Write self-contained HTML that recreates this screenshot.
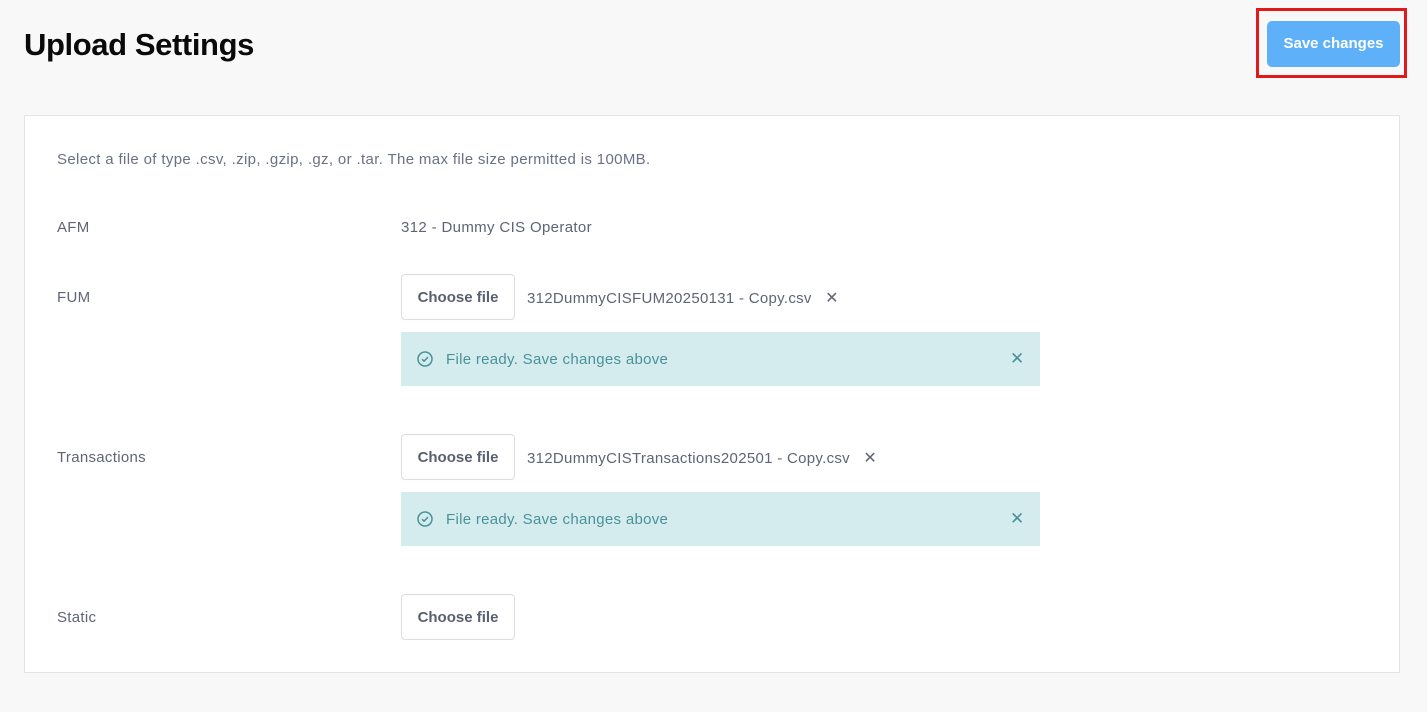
<!DOCTYPE html>
<html><head><style>
body{margin:0;background:#f8f8f9;font-family:"Liberation Sans",sans-serif;width:1427px;height:712px;position:relative;overflow:hidden}
h1{position:absolute;left:24px;top:27px;margin:0;font-size:31px;font-weight:bold;color:#0a0a0a;letter-spacing:-0.4px}
.hl{position:absolute;left:1256px;top:8px;width:151px;height:70px;box-sizing:border-box;border:3px solid #e0191b}
.save{position:absolute;left:1267px;top:21px;width:133px;height:46px;background:#5eb1f9;border-radius:5px;color:#fff;font-weight:bold;font-size:15px;text-align:center;line-height:46px}
.card{position:absolute;left:24px;top:115px;width:1374px;height:556px;background:#fff;border:1px solid #e3e3e6}
.t{position:absolute;color:#6b7184;font-size:15px;letter-spacing:0.35px}
.lbl{position:absolute;left:57px;color:#5f6575;font-size:15px;letter-spacing:0.3px}
.btn{position:absolute;left:401px;width:112px;height:44px;border:1px solid #dcdde2;border-radius:4px;background:#fff;color:#5b6070;font-weight:bold;font-size:15px;text-align:center;line-height:46px}
.fn{position:absolute;left:527px;color:#5f6575;font-size:15px;letter-spacing:0.3px}
.al{position:absolute;left:401px;width:639px;height:54px;background:#d5ecef;color:#4a9298;font-size:15px;line-height:54px;letter-spacing:0.3px}
.al span{position:absolute;left:45px;top:1px}
.al svg{position:absolute;left:16px;top:19px}
.al .x{position:absolute;left:609px;font-size:17px}
</style></head><body>
<h1>Upload Settings</h1>
<div class="hl"></div><div class="save">Save changes</div>
<div class="card"></div>
<div class="t" style="left:57px;top:151px">Select a file of type .csv, .zip, .gzip, .gz, or .tar. The max file size permitted is 100MB.</div>
<div class="lbl" style="top:219px">AFM</div><div class="t" style="left:401px;top:219px;color:#5f6575">312 - Dummy CIS Operator</div>
<div class="lbl" style="top:289px">FUM</div>
<div class="btn" style="top:274px">Choose file</div>
<div class="fn" style="top:288px">312DummyCISFUM20250131 - Copy.csv &nbsp;&nbsp;<span style="font-size:16px">✕</span></div>
<div class="al" style="top:332px"><svg width="16" height="16" viewBox="0 0 16 16"><circle cx="8" cy="8" r="7" fill="none" stroke="#4a9298" stroke-width="1.5"/><path d="M5 8.2l2 2 4-4" fill="none" stroke="#4a9298" stroke-width="1.5"/></svg><span>File ready. Save changes above</span><span class="x" style="left:609px;top:0">✕</span></div>
<div class="lbl" style="top:449px">Transactions</div>
<div class="btn" style="top:434px">Choose file</div>
<div class="fn" style="top:448px">312DummyCISTransactions202501 - Copy.csv &nbsp;&nbsp;<span style="font-size:16px">✕</span></div>
<div class="al" style="top:492px"><svg width="16" height="16" viewBox="0 0 16 16"><circle cx="8" cy="8" r="7" fill="none" stroke="#4a9298" stroke-width="1.5"/><path d="M5 8.2l2 2 4-4" fill="none" stroke="#4a9298" stroke-width="1.5"/></svg><span>File ready. Save changes above</span><span class="x" style="left:609px;top:0">✕</span></div>
<div class="lbl" style="top:609px">Static</div>
<div class="btn" style="top:594px">Choose file</div>
</body></html>
